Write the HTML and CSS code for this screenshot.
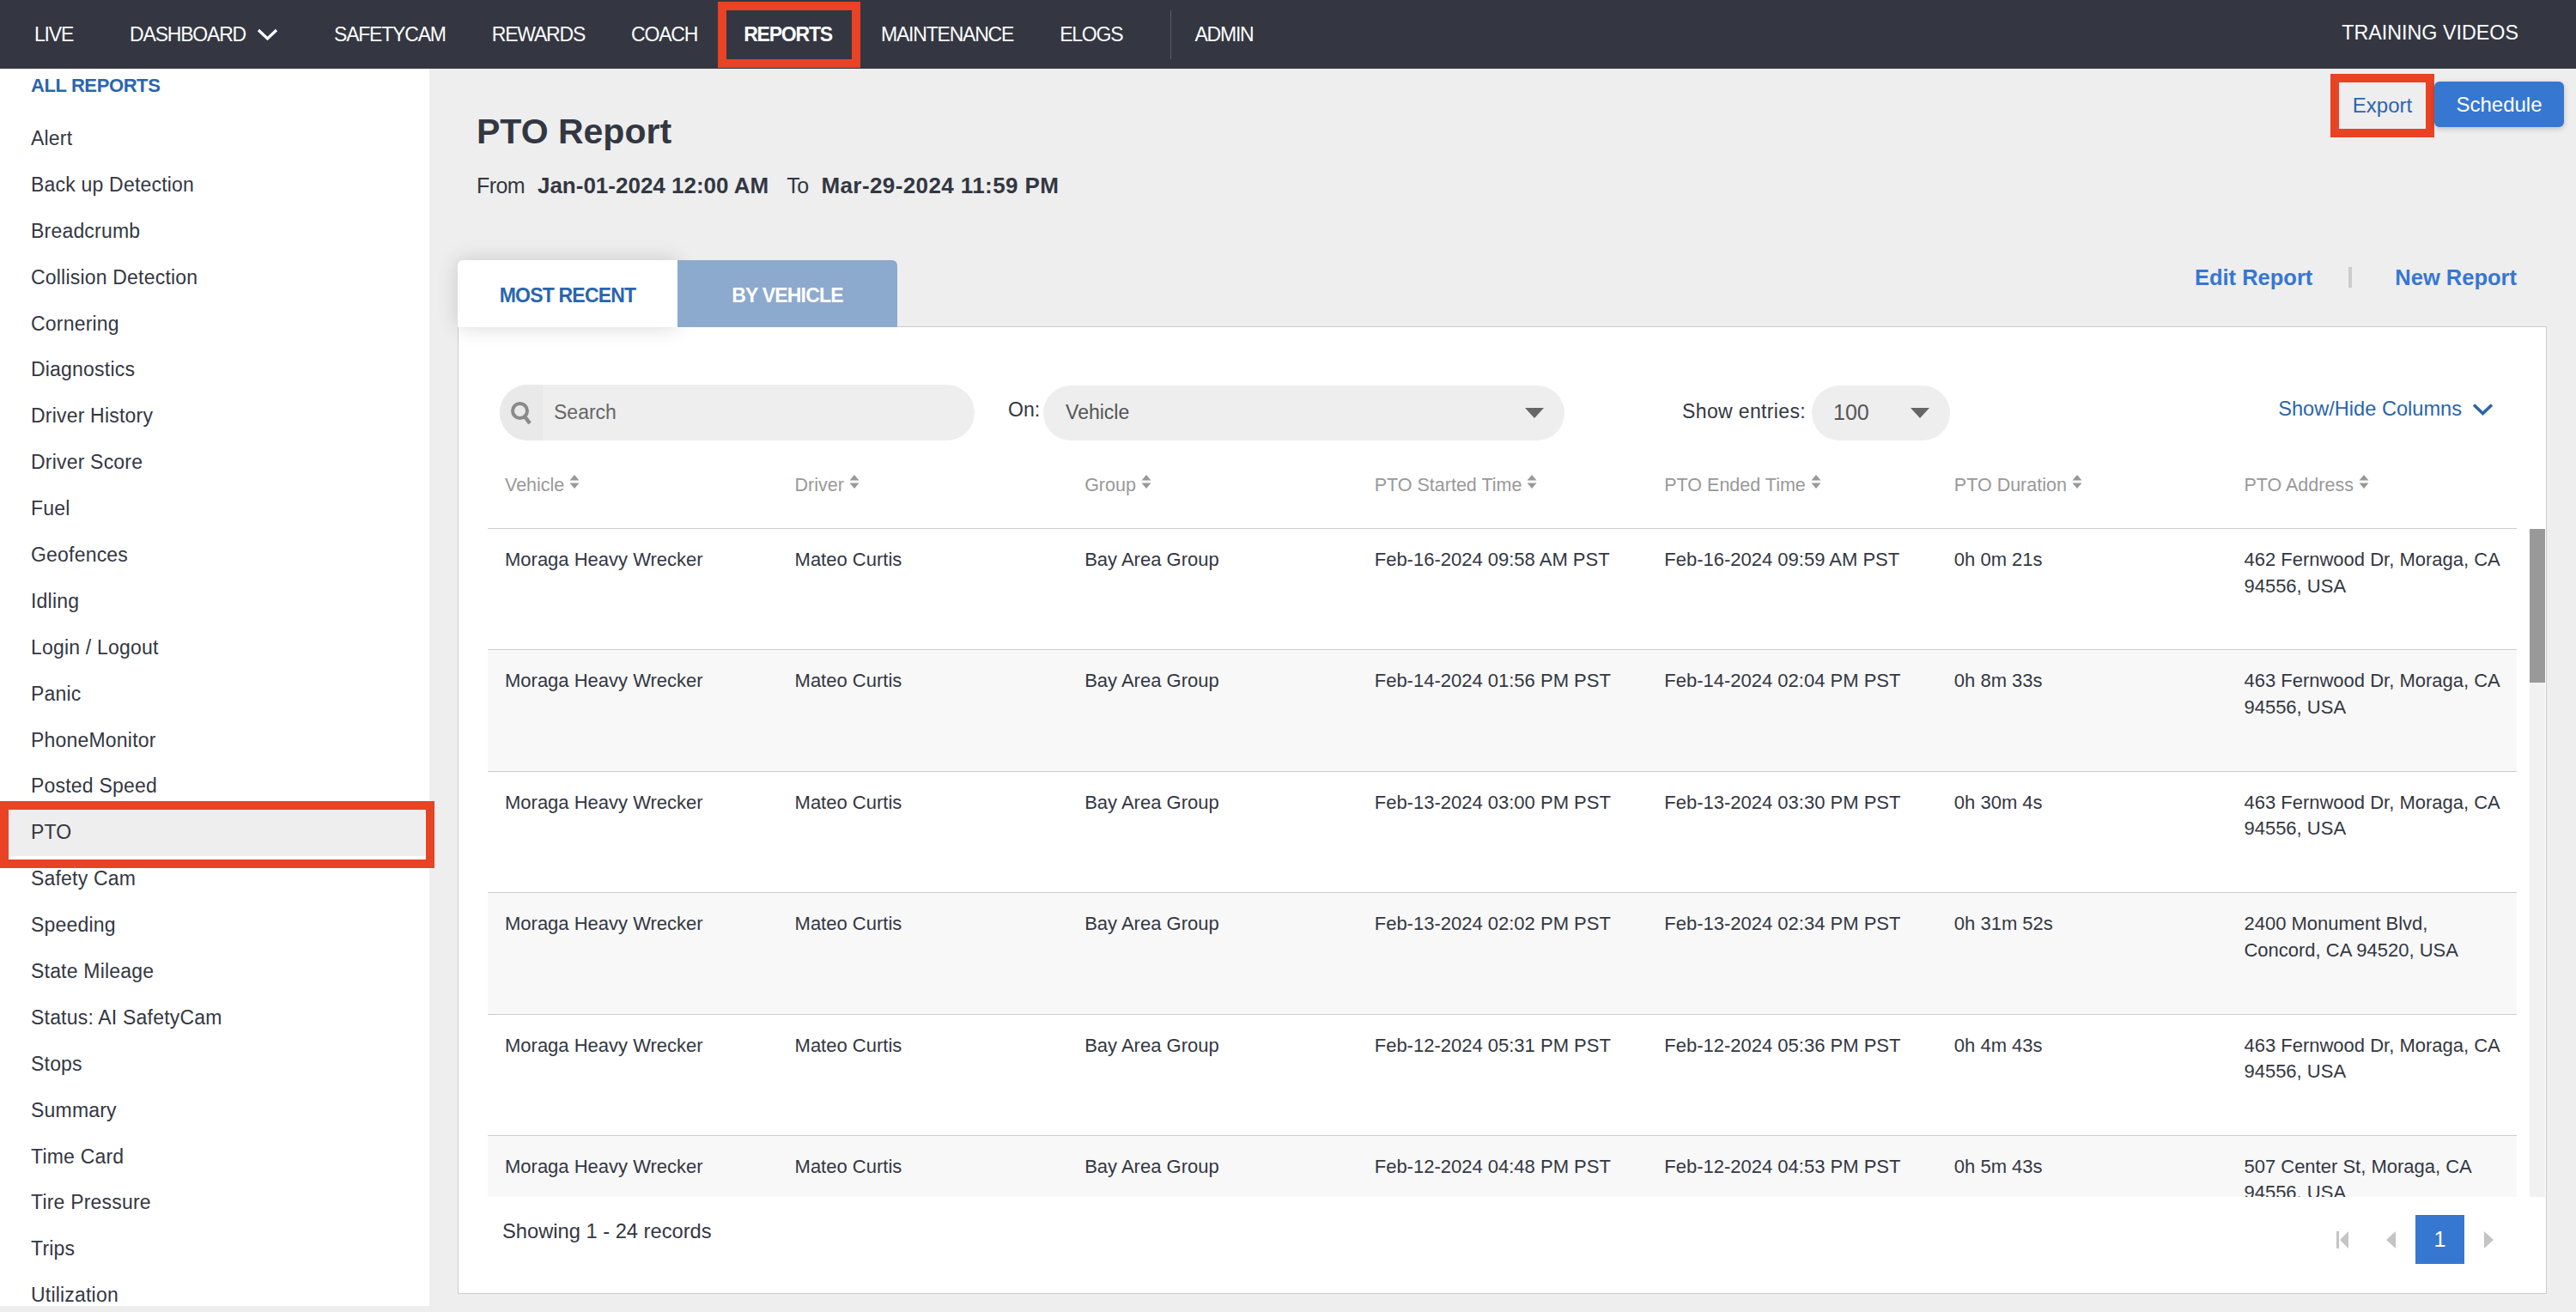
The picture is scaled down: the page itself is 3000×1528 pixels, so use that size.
FILE: index.html
```html
<!DOCTYPE html>
<html>
<head>
    <title>PTO Report</title>
    <link rel="stylesheet" href="styles.css">
</head>
<body>
    <nav class="topnav">
        <a class="nav-link">LIVE</a>
        <a class="nav-link nav-dashboard">DASHBOARD
            <svg class="nav-chevron" width="25" height="14" viewBox="0 0 25 14"><path d="M2 2l10.500 10L23 2" fill="none" stroke="#fff" stroke-width="3.200"/></svg>
        </a>
        <a class="nav-link">SAFETYCAM</a>
        <a class="nav-link">REWARDS</a>
        <a class="nav-link">COACH</a>
        <a class="nav-link nav-active">REPORTS</a>
        <a class="nav-link">MAINTENANCE</a>
        <a class="nav-link">ELOGS</a>
        <span class="nav-sep"></span>
        <a class="nav-link">ADMIN</a>
        <a class="nav-training">TRAINING VIDEOS</a>
    </nav>

    <div class="layout">
        <aside class="sidebar">
            <div class="sidebar-title">ALL REPORTS</div>
            <ul class="report-list">
                <li>Alert</li>
                <li>Back up Detection</li>
                <li>Breadcrumb</li>
                <li>Collision Detection</li>
                <li>Cornering</li>
                <li>Diagnostics</li>
                <li>Driver History</li>
                <li>Driver Score</li>
                <li>Fuel</li>
                <li>Geofences</li>
                <li>Idling</li>
                <li>Login / Logout</li>
                <li>Panic</li>
                <li>PhoneMonitor</li>
                <li>Posted Speed</li>
                <li class="report-active">PTO</li>
                <li>Safety Cam</li>
                <li>Speeding</li>
                <li>State Mileage</li>
                <li>Status: AI SafetyCam</li>
                <li>Stops</li>
                <li>Summary</li>
                <li>Time Card</li>
                <li>Tire Pressure</li>
                <li>Trips</li>
                <li>Utilization</li>
            </ul>
        </aside>

        <main class="content">
            <div class="report-top">
                <div class="report-heading">
                    <h1>PTO Report</h1>
                    <p class="report-range"><span>From</span><b>Jan-01-2024 12:00 AM</b><span>To</span><b>Mar-29-2024 11:59 PM</b></p>
                </div>
                <div class="report-actions">
                    <button class="btn-export">Export</button>
                    <button class="btn-schedule">Schedule</button>
                </div>
            </div>

            <div class="tab-row">
                <div class="tabs">
                    <div class="tab tab-active">MOST RECENT</div>
                    <div class="tab">BY VEHICLE</div>
                </div>
                <div class="tab-links">
                    <a>Edit Report</a>
                    <span class="tab-links-sep"></span>
                    <a>New Report</a>
                </div>
            </div>

            <section class="panel">
                <div class="toolbar">
                    <div class="search-box">
                        <span class="search-icon">
                            <svg width="26" height="28" viewBox="0 0 26 28"><circle cx="11.500" cy="11.500" r="8.500" fill="none" stroke="#8a8a8a" stroke-width="4"/><path d="M17 18l6 8" stroke="#8a8a8a" stroke-width="4.500" fill="none"/></svg>
                        </span>
                        <span class="search-text">Search</span>
                    </div>
                    <label class="on-label">On:</label>
                    <div class="select-pill select-on">Vehicle<i class="caret"></i></div>
                    <label class="entries-label">Show entries:</label>
                    <div class="select-pill select-entries">100<i class="caret"></i></div>
                    <a class="columns-link">Show/Hide Columns
                        <svg width="25" height="15" viewBox="0 0 25 15"><path d="M2 2.500l10.500 10L23 2.500" fill="none" stroke="#2a65ad" stroke-width="3.600"/></svg>
                    </a>
                </div>

                <div class="grid-head">
                    <div>Vehicle<svg class="sort" viewBox="0 0 12 16"><path d="M6 0l5.500 6.500H.5zM6 16L.5 9.500h11z"/></svg></div>
                    <div>Driver<svg class="sort" viewBox="0 0 12 16"><path d="M6 0l5.500 6.500H.5zM6 16L.5 9.500h11z"/></svg></div>
                    <div>Group<svg class="sort" viewBox="0 0 12 16"><path d="M6 0l5.500 6.500H.5zM6 16L.5 9.500h11z"/></svg></div>
                    <div>PTO Started Time<svg class="sort" viewBox="0 0 12 16"><path d="M6 0l5.500 6.500H.5zM6 16L.5 9.500h11z"/></svg></div>
                    <div>PTO Ended Time<svg class="sort" viewBox="0 0 12 16"><path d="M6 0l5.500 6.500H.5zM6 16L.5 9.500h11z"/></svg></div>
                    <div>PTO Duration<svg class="sort" viewBox="0 0 12 16"><path d="M6 0l5.500 6.500H.5zM6 16L.5 9.500h11z"/></svg></div>
                    <div>PTO Address<svg class="sort" viewBox="0 0 12 16"><path d="M6 0l5.500 6.500H.5zM6 16L.5 9.500h11z"/></svg></div>
                </div>

                <div class="grid-scroll">
                    <div class="grid-body">
                        <div class="grid-row">
                            <div>Moraga Heavy Wrecker</div><div>Mateo Curtis</div><div>Bay Area Group</div>
                            <div>Feb-16-2024 09:58 AM PST</div><div>Feb-16-2024 09:59 AM PST</div><div>0h 0m 21s</div>
                            <div>462 Fernwood Dr, Moraga, CA 94556, USA</div>
                        </div>
                        <div class="grid-row">
                            <div>Moraga Heavy Wrecker</div><div>Mateo Curtis</div><div>Bay Area Group</div>
                            <div>Feb-14-2024 01:56 PM PST</div><div>Feb-14-2024 02:04 PM PST</div><div>0h 8m 33s</div>
                            <div>463 Fernwood Dr, Moraga, CA 94556, USA</div>
                        </div>
                        <div class="grid-row">
                            <div>Moraga Heavy Wrecker</div><div>Mateo Curtis</div><div>Bay Area Group</div>
                            <div>Feb-13-2024 03:00 PM PST</div><div>Feb-13-2024 03:30 PM PST</div><div>0h 30m 4s</div>
                            <div>463 Fernwood Dr, Moraga, CA 94556, USA</div>
                        </div>
                        <div class="grid-row">
                            <div>Moraga Heavy Wrecker</div><div>Mateo Curtis</div><div>Bay Area Group</div>
                            <div>Feb-13-2024 02:02 PM PST</div><div>Feb-13-2024 02:34 PM PST</div><div>0h 31m 52s</div>
                            <div>2400 Monument Blvd, Concord, CA 94520, USA</div>
                        </div>
                        <div class="grid-row">
                            <div>Moraga Heavy Wrecker</div><div>Mateo Curtis</div><div>Bay Area Group</div>
                            <div>Feb-12-2024 05:31 PM PST</div><div>Feb-12-2024 05:36 PM PST</div><div>0h 4m 43s</div>
                            <div>463 Fernwood Dr, Moraga, CA 94556, USA</div>
                        </div>
                        <div class="grid-row">
                            <div>Moraga Heavy Wrecker</div><div>Mateo Curtis</div><div>Bay Area Group</div>
                            <div>Feb-12-2024 04:48 PM PST</div><div>Feb-12-2024 04:53 PM PST</div><div>0h 5m 43s</div>
                            <div>507 Center St, Moraga, CA 94556, USA</div>
                        </div>
                    </div>
                    <div class="scrollbar"><div class="scrollbar-thumb"></div></div>
                </div>

                <div class="panel-footer">
                    <span class="record-count">Showing 1 - 24 records</span>
                    <div class="pager">
                        <span class="pager-btn"><svg width="14" height="20" viewBox="0 0 14 20"><path d="M0 0h3v20H0zM14 0v20L4 10z"/></svg></span>
                        <span class="pager-btn"><svg width="11" height="20" viewBox="0 0 11 20"><path d="M11 0v20L0 10z"/></svg></span>
                        <span class="pager-btn pager-current">1</span>
                        <span class="pager-btn"><svg width="11" height="20" viewBox="0 0 11 20"><path d="M0 0v20l11-10z"/></svg></span>
                    </div>
                </div>
            </section>
        </main>
    </div>
</body>
</html>
```

FILE: styles.css
```css
*, *::after {
    box-sizing: border-box;
}
html, body {
    margin: 0;
    height: 1528px;
    overflow: hidden;
}
body {
    font-family: "Liberation Sans", Arial, sans-serif;
    background-color: #eeeeee;
    color: #333742;
}

/* top bar */
.topnav {
    display: flex;
    align-items: center;
    height: 80px;
    padding-left: 13px;
    background-color: #343741;
    color: #fff;
    font-size: 23px;
    letter-spacing: -1.200px;
}
.nav-link {
    position: relative;
    padding: 0 27px;
}
.nav-dashboard {
    display: flex;
    align-items: center;
    gap: 13px;
    margin-left: 12px;
    padding-right: 38px;
    padding-left: 27px;
}
.nav-chevron {
    display: block;
}
.nav-active {
    margin-right: 3px;
    font-weight: bold;
}
.nav-active::after {
    content: "";
    position: absolute;
    left: -3px;
    right: -6px;
    top: -25px;
    height: 77px;
    border: 10px solid #e94225;
}
.nav-sep {
    width: 1px;
    height: 57px;
    margin-left: 29px;
    background-color: #5c5f68;
}
.nav-training {
    margin-left: auto;
    margin-right: 67px;
    font-size: 23.300px;
    letter-spacing: 0;
    position: relative;
    top: -2px;
}

/* page columns */
.layout {
    display: flex;
}
.sidebar {
    flex: none;
    width: 500px;
    height: 1441px;
    background-color: #fff;
}
.sidebar-title {
    margin-top: 5px;
    padding-left: 36px;
    line-height: 30px;
    font-size: 22px;
    font-weight: bold;
    letter-spacing: -0.400px;
    color: #2a65ad;
}
.report-list {
    list-style: none;
    margin: 20px 0 0;
    padding: 0;
}
.report-list li {
    position: relative;
    height: 53.900px;
    padding-left: 36px;
    line-height: 53.900px;
    font-size: 23px;
    letter-spacing: 0.200px;
}
.report-active {
    background-color: #eeeeee;
}
.report-active::after {
    content: "";
    position: absolute;
    left: 0;
    right: -6px;
    top: -10px;
    height: 78px;
    border: 10px solid #e94225;
}

.content {
    flex: 1;
    min-width: 0;
    padding: 6px 34px 0 33px;
}

/* heading */
.report-top {
    display: flex;
    justify-content: space-between;
    height: 217px;
    margin-right: -20px;
}
.report-heading {
    padding-left: 22px;
}
.report-heading h1 {
    margin: 42px 0 0;
    line-height: 50px;
    font-size: 41px;
    font-weight: bold;
}
.report-range {
    display: flex;
    gap: 15px;
    margin: 23px 0 0;
    line-height: 30px;
    font-size: 25px;
}
.report-range span {
    letter-spacing: -0.600px;
}
.report-range b {
    margin-right: 6px;
    font-size: 26px;
}
.report-range b:last-child {
    letter-spacing: 0.400px;
}
.report-actions {
    display: flex;
    align-items: flex-start;
}
.btn-export, .btn-schedule {
    border: none;
    font-family: inherit;
    font-size: 24px;
}
.btn-export {
    width: 121px;
    height: 74px;
    border: 10px solid #e94225;
    background: none;
    color: #2a65ad;
    padding: 0;
}
.btn-schedule {
    width: 151px;
    height: 53px;
    margin-top: 9px;
    border-radius: 6px;
    background-color: #3677d2;
    color: #fff;
    box-shadow: 0 2px 6px rgba(0,0,0,0.2);
}

/* tabs */
.tab-row {
    display: flex;
    justify-content: space-between;
    height: 77px;
}
.tabs {
    display: flex;
    position: relative;
    z-index: 1;
}
.tab {
    width: 256px;
    height: 78px;
    padding-top: 2px;
    line-height: 78px;
    text-align: center;
    font-size: 23px;
    font-weight: bold;
    letter-spacing: -0.800px;
    color: #fff;
    background-color: #8caacd;
    border-top-right-radius: 6px;
}
.tab-active {
    color: #2a65ad;
    background-color: #fff;
    border-radius: 6px 0 0 0;
    box-shadow: 0 0 24px rgba(0,0,0,0.16);
}
.tab-links {
    display: flex;
    align-items: center;
    height: 40px;
    padding-right: 35px;
    font-size: 25.500px;
    font-weight: bold;
    color: #3677d2;
}
.tab-links-sep {
    width: 4px;
    height: 24px;
    margin: 0 50px 0 42px;
    background-color: #cccccc;
}

/* report panel */
.panel {
    height: 1127px;
    background-color: #fff;
    border: 1px solid #cccccc;
}
.toolbar {
    display: flex;
    align-items: center;
    height: 65px;
    margin: 67px 0 0 48px;
    font-size: 23px;
}
.search-box {
    display: flex;
    align-items: center;
    width: 553px;
    height: 65px;
    border-radius: 33px;
    overflow: hidden;
    background-color: #eeeeee;
}
.search-icon {
    display: flex;
    align-items: center;
    justify-content: center;
    width: 50px;
    height: 100%;
    background-color: #e9e9e9;
}
.search-text {
    margin-left: 13px;
    color: #666;
}
.on-label {
    margin: -6px 0 0 39px;
}
.select-pill {
    display: flex;
    align-items: center;
    justify-content: space-between;
    height: 64px;
    border-radius: 32px;
    background-color: #eeeeee;
    color: #555;
}
.select-on {
    width: 607px;
    margin-left: 4px;
    padding: 0 24px 0 26px;
}
.select-entries {
    width: 161px;
    margin-left: 7px;
    padding: 0 24px 0 25px;
    font-size: 25px;
}
.caret {
    width: 0;
    height: 0;
    border-left: 11px solid transparent;
    border-right: 11px solid transparent;
    border-top: 12px solid #666;
}
.entries-label {
    margin: -2px 0 0 137px;
    letter-spacing: 0.350px;
}
.columns-link {
    display: flex;
    align-items: center;
    gap: 12px;
    margin: -8px 0 0 auto;
    padding-right: 61px;
    font-size: 23.600px;
    color: #2a65ad;
}

/* report grid */
.grid-head, .grid-row {
    display: grid;
    grid-template-columns: repeat(7, 1fr);
}
.grid-head {
    height: 103px;
    width: 2363px;
    margin-left: 34px;
    padding-top: 37px;
    line-height: 30px;
    font-size: 21.500px;
    color: #999;
    border-bottom: 1px solid #cccccc;
}
.grid-head > div {
    padding-left: 20px;
}
.sort {
    width: 12px;
    height: 16px;
    margin-left: 6px;
    vertical-align: 3px;
    fill: #999;
}
.grid-scroll {
    display: flex;
    height: 778px;
    margin-left: 34px;
    overflow: hidden;
}
.grid-body {
    flex: none;
    width: 2363px;
}
.grid-row {
    height: 141.400px;
    padding-top: 21px;
    line-height: 30.500px;
    font-size: 22px;
    border-bottom: 1px solid #cccccc;
}
.grid-row > div {
    padding: 0 20px;
}
.grid-row:nth-child(even) {
    background-color: #f8f8f8;
}
.scrollbar {
    width: 18px;
    height: 778px;
    margin-left: 15px;
    background-color: #f1f1f1;
}
.scrollbar-thumb {
    height: 179px;
    background-color: #999;
}

/* footer */
.panel-footer {
    display: flex;
    justify-content: space-between;
    align-items: flex-start;
    padding: 21px 38px 0 51px;
}
.record-count {
    margin-top: 4px;
    line-height: 30px;
    font-size: 23.700px;
}
.pager {
    display: flex;
}
.pager-btn {
    display: flex;
    align-items: center;
    justify-content: center;
    width: 57px;
    height: 57px;
    font-size: 25px;
    fill: #c4c4c4;
}
.pager-current {
    background-color: #3677d2;
    color: #fff;
}
```
